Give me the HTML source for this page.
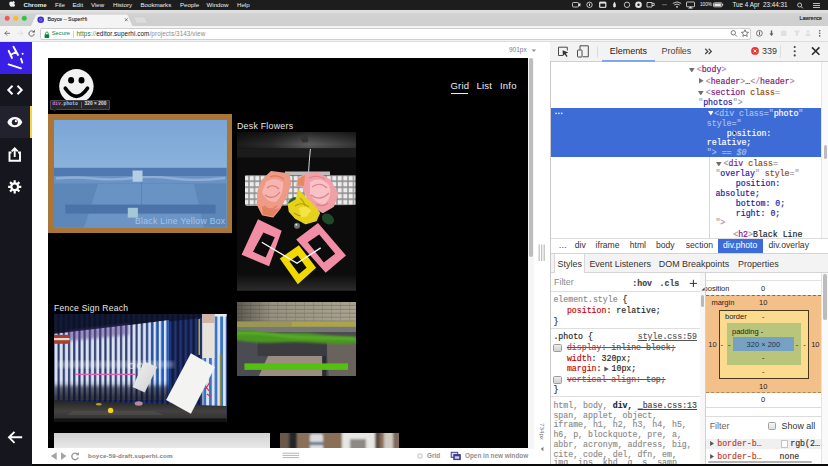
<!DOCTYPE html>
<html>
<head>
<meta charset="utf-8">
<title>Boyce - SuperHi</title>
<style>
*{box-sizing:border-box;margin:0;padding:0}
html,body{width:828px;height:466px;overflow:hidden;background:#fff}
body{position:relative;font-family:"Liberation Sans",sans-serif;color:#222}
.a{position:absolute;white-space:nowrap}
.t{position:absolute;white-space:nowrap;line-height:1;transform-origin:0 50%}
.mono{font-family:"Liberation Mono",monospace}
/* ---- mac menubar ---- */
#menubar{left:0;top:0;width:828px;height:9.5px;background:#1d1d1d}
#menubar .t{color:#eee;font-size:6.15px;top:1.8px}
/* ---- chrome frame ---- */
#tabstrip{left:0;top:9.5px;width:828px;height:16.5px;background:linear-gradient(#e2e2e2 0,#dcdcdc 2.5px,#d1d1d1 4.5px,#cfcfcf 100%)}
#toolbar{left:0;top:26px;width:828px;height:16px;background:#f4f4f4;border-bottom:1px solid #dcdcdc}
#urlbar{left:40px;top:27.5px;width:711px;height:12px;background:#fff;border:0.5px solid #cfcfcf;border-radius:2px}
/* ---- superhi sidebar ---- */
#side{left:0;top:42px;width:32px;height:424px;background:#16161e}
#logo{left:0;top:42px;width:32px;height:32px;background:#3a1fe6}
#siderow{left:0;top:106px;width:32px;height:32px;background:#22222f}
#sidebar-y{left:29.5px;top:106px;width:2.5px;height:32px;background:#f5d63d}
/* ---- preview ---- */
#page{left:48px;top:58px;width:479.5px;height:389.8px;background:#000;overflow:hidden}
#bottomstrip{left:32px;top:463.9px;width:796px;height:3px;background:#0a0a0a}
/* ---- devtools ---- */
#dt{left:550px;top:42px;width:278px;height:422px;background:#fff;overflow:hidden}
#dtbar{left:0;top:0;width:278px;height:19.5px;background:#f3f3f3;border-bottom:0.7px solid #d0d0d0}
.dts{font-size:8.95px;color:#333}
.tree{font-family:"Liberation Mono",monospace;font-size:8.24px;line-height:1;position:absolute;white-space:pre;-webkit-text-stroke:.18px currentColor}
.tg{color:#881280}.br{font-style:normal;color:#a98fa8}.sel .br{color:#a9bff0}.at{color:#994500}.av{color:#1a1aa6}.gy{color:#a8a8a8}
.sel .tg,.sel .at,.sel .gy{color:#a9bff0}.sel .av{color:#fff}
.css{font-family:"Liberation Mono",monospace;font-size:8.24px;line-height:1;position:absolute;white-space:pre;color:#222;-webkit-text-stroke:.15px currentColor}
.pn{color:#c80000}
.bm{font-size:7.5px;color:#222;position:absolute;white-space:nowrap;line-height:1;transform:translate(-50%,-50%)}
</style>
</head>
<body>
<!-- MENUBAR -->
<div id="menubar" class="a">
<svg class="a" style="left:9px;top:1.2px" width="6" height="7" viewBox="0 0 12 14"><path fill="#eee" d="M8.6 0c.1 1-.3 1.900-.9 2.600-.6.700-1.500 1.200-2.300 1.100-.1-.9.400-1.900.9-2.500C6.900.5 7.900.1 8.600 0zM11.400 10.300c-.4.900-.6 1.300-1.100 2.100-.7 1.100-1.700 2.400-2.900 2.400-1.100 0-1.400-.7-2.900-.7s-1.800.7-2.900.7C.4 14.800-.6 13.600-1.300 12.500-3.200 9.500-3.400 6-2.200 4.200c.8-1.300 2.200-2.100 3.400-2.100 1.300 0 2.100.7 3.200.7 1 0 1.700-.7 3.200-.7 1.100 0 2.300.6 3.100 1.700-2.700 1.500-2.300 5.400.7 6.500z" transform="translate(3 -1) scale(.85)"/></svg>
<span class="t" style="left:23.500px;font-weight:bold;font-size:6.100px">Chrome</span>
<span class="t" style="left:55px">File</span>
<span class="t" style="left:72.500px">Edit</span>
<span class="t" style="left:91px">View</span>
<span class="t" style="left:113px">History</span>
<span class="t" style="left:140.5px">Bookmarks</span>
<span class="t" style="left:180px">People</span>
<span class="t" style="left:206.5px">Window</span>
<span class="t" style="left:237px">Help</span>
<!-- status icons -->
<svg class="a" style="left:570px;top:0" width="160" height="9.5" viewBox="0 0 160 9.500">
<g fill="none" stroke="#e6e6e6" stroke-width=".8">
<rect x="2.500" y="2.500" width="6" height="4.500" rx=".8"/><circle cx="19.500" cy="4.800" r="2.700"/>
<rect x="29.500" y="2" width="6.500" height="5.500" rx=".6" fill="#e6e6e6"/>
<circle cx="57" cy="4.800" r="2.700"/>
<path d="M102.800 3.400 q4.200-3 8.400 0 M104.300 5 q2.700-2 5.400 0"/>
<rect x="116.500" y="2" width="8" height="4.800" rx=".5"/>
<path d="M77 2.500 h5 v4.500 h-5z M82 3.300 h2.200 v2.200 h-2.200"/>
<rect x="143.500" y="2.800" width="8.500" height="4" rx=".8"/>
</g>
<g fill="#e6e6e6">
<path d="M44.500 1.800 q2.200 2.600 1.300 5 q-1.300 1.400-2.600 0 q-.9-2.400 1.300-5z"/>
<circle cx="68.500" cy="4.800" r="3.300"/><rect x="92" y="4.400" width="5" height=".8" opacity=".5"/>
<circle cx="107" cy="6.800" r=".9"/><path d="M118 8.600 l2.500-2.200 l2.500 2.200z"/>
<rect x="144.300" y="3.500" width="6.600" height="2.600"/><rect x="152.300" y="4" width=".9" height="1.600"/>
<path d="M8.600 4 l1.800-1 v3.600 l-1.800-1z"/><rect x="19.100" y="3.500" width=".9" height="2.600"/>
</g>
<g fill="#1d1d1d"><circle cx="68.500" cy="4.800" r="1.200"/><rect x="30.300" y="3.600" width="4.900" height="3.200"/><path d="M56.300 3.200 h1.200 v1.800 h1.300 v.9 h-2.500z"/></g>
</svg>
<span class="t" style="left:700px;font-size:4.700px;top:2.600px">100%</span>
<span class="t" style="left:732.500px;font-size:6.300px">Tue 4 Apr&nbsp; 23:44:31</span>
<svg class="a" style="left:796px;top:1.500px" width="30" height="7" viewBox="0 0 30 7"><circle cx="3.600" cy="3" r="2" fill="none" stroke="#e6e6e6" stroke-width=".8"/><path d="M5 4.500 l1.800 1.800" stroke="#e6e6e6" stroke-width=".9"/><g fill="#cfcfcf"><rect x="17" y="1" width="7" height=".9"/><rect x="17" y="3" width="7" height=".9"/><rect x="17" y="5" width="7" height=".9"/></g></svg>
</div>
<!-- CHROME -->
<div id="tabstrip" class="a">
<svg class="a" style="left:0;top:0" width="160" height="16.500" viewBox="0 0 160 16.500">
<path d="M30.500 16.500 L35.500 5 Q36 4.200 37 4.200 H126.500 Q127.500 4.200 128 5 L133 16.500z" fill="#f4f4f4" stroke="#bdbdbd" stroke-width=".4"/>
<path d="M133.500 6.800 H144.500 L147.500 13.300 H136.500z" fill="#dcdcdc" stroke="#c4c4c4" stroke-width=".4"/>
<circle cx="7.200" cy="8.200" r="2.500" fill="#f25a52"/><circle cx="15.800" cy="8.200" r="2.500" fill="#f6bc2f"/><circle cx="24.300" cy="8.200" r="2.500" fill="#2ec840"/>
<circle cx="40.700" cy="9.700" r="3.300" fill="#3a2fd8"/><circle cx="40.700" cy="9.700" r="1.200" fill="none" stroke="#9aa0ff" stroke-width=".6"/>
<path d="M124.800 8.200 l3 3 M127.800 8.200 l-3 3" stroke="#555" stroke-width=".7"/>
</svg>
<span class="t" style="left:47.500px;top:7.200px;font-size:5.300px;color:#1a1a1a;-webkit-text-stroke:.1px #1a1a1a">Boyce – SuperHi</span>
<span class="t" style="left:799.500px;top:6.500px;font-size:5.200px;color:#111;-webkit-text-stroke:.12px #111">Lawrence</span>
</div>
<div id="toolbar" class="a">
<svg class="a" style="left:0;top:0" width="40" height="15" viewBox="0 0 40 15"><g fill="none" stroke-linecap="round" stroke-linejoin="round">
<path d="M9.600 7.300 H5 M7 5.200 L4.900 7.300 L7 9.400" stroke="#6a6a6a" stroke-width=".9"/>
<path d="M17.500 7.300 H22.700 M20.500 5 L22.800 7.300 L20.500 9.600" stroke="#dedede" stroke-width=".9"/>
<path d="M33.600 5.700 A2.700 2.700 0 1 0 34.200 8.300" stroke="#5a5a5a" stroke-width=".9"/></g><path d="M34.800 3.800 v2.600 h-2.600z" fill="#5a5a5a"/></svg>
<svg class="a" style="left:728px;top:0;z-index:3" width="100" height="15" viewBox="0 0 100 15"><g fill="none" stroke="#5a5a5a" stroke-width=".8">
<circle cx="5.300" cy="6.800" r="2.200"/><path d="M6.900 8.500 l2 2"/>
<path d="M17 3.800 l1.050 2.300 2.500.25 -1.900 1.650 .55 2.450 -2.200-1.300 -2.200 1.300 .55-2.450 -1.900-1.650 2.500-.25z"/>
<circle cx="31.400" cy="7.300" r="2.900"/></g>
<g fill="#5a5a5a"><rect x="31" y="5.500" width=".9" height="3.600"/><path d="M42.800 4.500 h1.400 v3 h1.300 l-2 2.600 -2-2.600 h1.300z"/>
<circle cx="91.700" cy="4.700" r=".8"/><circle cx="91.700" cy="7.300" r=".8"/><circle cx="91.700" cy="9.900" r=".8"/></g>
<g fill="#e0e0e0"><rect x="53" y="4.500" width="5.500" height="5.500" rx="1"/><path d="M66 4.500 h6 l-2 3 v2.500 h-2 v-2.500z"/><path d="M77 10 q3-6 6 0z"/><circle cx="80" cy="5.500" r="1.300"/></g></svg>
</div>
<div id="urlbar" class="a">
<svg class="a" style="left:3px;top:2px" width="6" height="8" viewBox="0 0 6 8"><rect x=".6" y="3.200" width="4.600" height="3.800" rx=".6" fill="#0b8043"/><path d="M1.600 3.300 V2.300 a1.300 1.300 0 0 1 2.600 0 V3.300" fill="none" stroke="#0b8043" stroke-width=".8"/></svg>
<span class="t" style="left:10.700px;top:2.700px;font-size:5.800px;color:#0b8043">Secure</span>
<span class="a" style="left:32.300px;top:2px;width:.5px;height:7.500px;background:#d0d0d0"></span>
<span class="t" style="left:35.500px;top:2.400px;font-size:6.300px;letter-spacing:.1px;color:#8a8a8a"><span style="color:#0b8043">https</span>://<span style="color:#111">editor.superhi.com</span>/projects/3143/view</span>
</div>
<!-- SIDEBAR -->
<div id="side" class="a"></div>
<div id="logo" class="a"></div>
<div id="siderow" class="a"></div>
<div id="sidebar-y" class="a"></div>
<svg class="a" style="left:0;top:42px" width="32" height="424" viewBox="0 0 32 424">
<!-- Hi logo -->
<g stroke="#fff" stroke-width="1.900" stroke-linecap="round" fill="none">
<path d="M8.700 8.800 L12 16 M13.500 4.800 L18 13 M10.500 13 L15.800 10"/>
<path d="M21 16.800 L22.300 20.600"/>
<path d="M8.600 22.400 L21 26.300"/>
</g><circle cx="22.600" cy="11.800" r="1" fill="#fff"/>
<!-- code icon -->
<g stroke="#fff" stroke-width="2" fill="none" stroke-linejoin="miter"><path d="M12.500 43.700 L8.300 48 L12.500 52.300"/><path d="M17.500 43.700 L21.700 48 L17.500 52.300"/></g>
<!-- eye -->
<path d="M7.300 80.200 C10 73.400 19.600 73.400 22.300 80.200 C19.600 87 10 87 7.300 80.200z" fill="#fff"/><circle cx="14.800" cy="80.200" r="3" fill="#22222f"/><circle cx="15.900" cy="79.200" r="1.100" fill="#fff"/>
<!-- share -->
<g stroke="#fff" stroke-width="1.900" fill="none"><path d="M11.500 110.500 H9.500 V118.800 H20 V110.500 H18"/><path d="M14.700 115 V106.500 M11.700 109.300 L14.700 106.300 L17.700 109.300"/></g>
<!-- gear -->
<g transform="translate(14.700 144.800)"><g stroke="#fff" stroke-width="2.200"><path d="M0 -6.600 V6.600 M-6.600 0 H6.600 M-4.650 -4.650 L4.650 4.650 M-4.650 4.650 L4.650 -4.650"/></g><circle r="4.500" fill="#fff"/><circle r="2.300" fill="#15151f"/></g>
<!-- back arrow -->
<g stroke="#fff" stroke-width="1.900" fill="none"><path d="M9 395.300 H22.200 M14.500 389.800 L9 395.300 L14.500 400.800"/></g>
</svg>
<!-- PREVIEW -->
<div id="page" class="a">
<!-- coordinates inside #page are screen coords minus (48,58) -->
<!-- smiley -->
<svg class="a" style="left:9px;top:9px" width="38" height="38" viewBox="0 0 38 38"><circle cx="19.400" cy="19.300" r="17.200" fill="#f2f2f2"/><ellipse cx="14.100" cy="13.300" rx="3" ry="3.200" fill="#000"/><ellipse cx="24.500" cy="13.300" rx="3" ry="3.200" fill="#000"/><path d="M8.300 21.300 Q19.400 37.400 30.500 21.300" fill="none" stroke="#000" stroke-width="3.700" stroke-linecap="round"/></svg>
<!-- nav -->
<span class="t" style="left:402.500px;top:22.900px;font-size:9.500px;color:#eee;letter-spacing:.2px">Grid</span>
<span class="a" style="left:402.500px;top:34.700px;width:17.500px;height:1px;background:#eee"></span>
<span class="t" style="left:428.500px;top:22.900px;font-size:9.500px;color:#eee;letter-spacing:.2px">List</span>
<span class="t" style="left:452px;top:22.900px;font-size:9.500px;color:#eee;letter-spacing:.2px">Info</span>
<!-- inspect tooltip -->
<div class="a" style="left:1.500px;top:41.800px;width:60.300px;height:9.800px;background:#27272b;border:.5px solid #4a4a50;border-radius:1px"></div>
<svg class="a" style="left:3.500px;top:51.400px" width="6" height="3" viewBox="0 0 6 3"><path d="M0 0 H5 L2.500 2.600z" fill="#2c2c30"/></svg>
<span class="t mono" style="left:4.200px;top:44.200px;font-size:4.750px;font-weight:bold;color:#d070dc">div<span style="color:#9ccbf2">.photo</span></span>
<span class="a" style="left:33px;top:43.500px;width:.5px;height:6.500px;background:#5c5c62"></span>
<span class="t" style="left:36.600px;top:44.200px;font-size:4.700px;font-weight:bold;color:#e4e4e4;letter-spacing:.1px">320 × 200</span>
<!-- photo 1 with inspect overlay -->
<div class="a" style="left:.4px;top:56.300px;width:183.600px;height:118.300px;background:#aa7638"></div>
<div id="p1" class="a" style="left:6px;top:62px;width:172.700px;height:107.800px;background:#7da6d6;overflow:hidden">
<svg class="a" style="left:0;top:0" width="172.700" height="107.800" viewBox="0 0 172.700 107.800">
<defs><linearGradient id="sky" x1="0" y1="0" x2="0" y2="1"><stop offset="0" stop-color="#7ba5d5"/><stop offset="1" stop-color="#8bb2dc"/></linearGradient>
<filter id="bl1" x="-5%" y="-20%" width="110%" height="140%"><feGaussianBlur stdDeviation=".7"/></filter></defs>
<rect width="172.700" height="48" fill="url(#sky)"/>
<rect y="47.800" width="172.700" height="8.600" fill="#4f79b0"/>
<rect y="56" width="172.700" height="8" fill="#6a92c4"/>
<path d="M2 58.500 Q20 56.500 40 58.500 T80 58 T120 58.500 T171 58" stroke="#a6c2e4" stroke-width="2.400" fill="none" opacity=".6" filter="url(#bl1)"/>
<rect y="63.500" width="172.700" height="44.300" fill="#5d86b9"/>
<path d="M44 64 H140 L150 107.800 H30z" fill="#6a93c5"/>
<path d="M30 107.800 L36 95 H140 L148 107.800z" fill="#6c95c6"/>
<rect x="11.300" y="84.600" width="150.300" height="9" fill="#4b73aa"/>
<rect x="87.300" y="61" width=".7" height="24" fill="#46699a" opacity=".6"/>
<rect x="78.600" y="50.500" width="9.900" height="11.200" fill="#b3cde6" filter="url(#bl1)"/>
<rect x="73.800" y="87.800" width="10.100" height="9.800" fill="#a5c8d7"/>
</svg>
<span class="t" style="right:1.200px;top:96.900px;font-size:8.600px;color:#a3c4e8;letter-spacing:.33px">Black Line Yellow Box</span>
</div>
<!-- photo 2 -->
<span class="t" style="left:189px;top:63.500px;font-size:8.800px;color:#e8e8e8;letter-spacing:.25px">Desk Flowers</span>
<div id="p2" class="a" style="left:189px;top:74.300px;width:119.300px;height:158.600px;background:#0c0c0c;overflow:hidden">
<svg class="a" style="left:0;top:0" width="119.300" height="158.600" viewBox="0 0 119.300 158.600">
<defs>
<linearGradient id="chin" x1="0" y1="0" x2="1" y2="0"><stop offset="0" stop-color="#1b1b1b"/><stop offset=".3" stop-color="#2e2e2e"/><stop offset=".6" stop-color="#5e5e5e"/><stop offset="1" stop-color="#343434"/></linearGradient>
<linearGradient id="chinv" x1="0" y1="0" x2="0" y2="1"><stop offset="0" stop-color="#000" stop-opacity=".6"/><stop offset=".75" stop-color="#000" stop-opacity="0"/><stop offset="1" stop-color="#000" stop-opacity=".15"/></linearGradient>
<radialGradient id="rose1" cx=".45" cy=".4" r=".65"><stop offset="0" stop-color="#f9bdb6"/><stop offset=".6" stop-color="#f0958a"/><stop offset="1" stop-color="#d8705e"/></radialGradient>
<radialGradient id="rosey" cx=".5" cy=".45" r=".6"><stop offset="0" stop-color="#f5e23a"/><stop offset=".7" stop-color="#e3c81a"/><stop offset="1" stop-color="#b59a10"/></radialGradient>
<linearGradient id="deskb" x1="0" y1="0" x2="0" y2="1"><stop offset="0" stop-color="#0c0c0c"/><stop offset="1" stop-color="#2c2c2c"/></linearGradient>
<pattern id="keys" width="5.500" height="6" x="1" y="1.200" patternUnits="userSpaceOnUse"><rect width="5.500" height="6" fill="#8e8e8e"/><rect x=".7" y=".8" width="4.100" height="4.400" fill="#ececec"/></pattern>
<filter id="bl2"><feGaussianBlur stdDeviation=".5"/></filter>
</defs>
<rect width="119.300" height="16.500" fill="url(#chin)"/><rect width="119.300" height="16.500" fill="url(#chinv)"/>
<path d="M67.700 4.600 c1-1.400 3-1.200 3.300 0 c-1.300 .8-1.200 2.900 .2 3.500 c-.5 1.400-1.500 2.400-2.200 2.400 c-.6 0-.8-.4-1.500-.4 s-1 .4-1.500 .4 c-1 0-2.600-2.400-2.300-4.300 c.3-1.800 2.400-2.500 4-1.600z" fill="#333" transform="translate(-1 -.3) scale(1.020)"/>
<rect y="16.500" width="119.300" height="9" fill="#1b1b1b"/>
<rect y="142" width="119.300" height="16.600" fill="url(#deskb)"/>
<path d="M73.400 17 Q72 30 71.500 42" stroke="#d8d8d8" stroke-width="1" fill="none"/>
<rect x="48" y="39.500" width="45" height="3.600" fill="#bdbdbd" filter="url(#bl2)"/>
<path d="M9 43.200 H118.500 V73 L10 74 Q8 74 8 72 V44.200 Q8 43.200 9 43.200z" fill="url(#keys)" filter="url(#bl2)"/>
<!-- leaves -->
<ellipse cx="91" cy="87" rx="6.500" ry="5" fill="#1e4a28" transform="rotate(35 91 87)"/>
<ellipse cx="55.500" cy="69" rx="5" ry="2.600" fill="#2b5e2a" transform="rotate(-40 55.500 69)"/>
<circle cx="60" cy="93.800" r="3" fill="#6f7472"/><circle cx="59.300" cy="92.800" r="1" fill="#e8e8e8"/>
<!-- roses -->
<g filter="url(#bl2)">
<path d="M34.300 40 L51.500 42.300 L53.200 51.700 L49.800 62 L42.900 75.800 L36 84.400 L25.800 82.600 L20.600 72.300 L21.500 58.600 L25.800 48.300z" fill="#ee9a84" stroke="#ee9a84" stroke-width="2" stroke-linejoin="round"/>
<path d="M29 50 Q37 44 46 50 Q47 62 39 70 Q28 70 25 60z" fill="#f6b4b2"/>
<path d="M30 56 q6-5 12 1 M28 63 q8 6 15-3 M27 74 q6 6 13 0 M33 45 q7-3 14 2" stroke="#dc7c66" stroke-width="1.100" fill="none"/>
<path d="M25.800 82.600 L36 84.400 L42.900 75.800 Q34 80 25 74z" fill="#e27f5e"/>
<path d="M68.700 42.300 L80.700 41.100 L92.700 48.300 L100.400 62 L96.100 74.100 L85.800 80.100 L75.500 74.100 L68.700 62 L66.100 53.500 L60.100 53.500 L61.800 46.600z" fill="#f0a0a6" stroke="#f0a0a6" stroke-width="2" stroke-linejoin="round"/>
<path d="M73 50 Q83 44 92 53 Q96 64 88 72 Q78 72 73 62z" fill="#f8c2c6"/>
<path d="M61 47 L68 43 L67 54 L60.500 53.500z" fill="#e48a62"/>
<path d="M75 55 q8-6 15 1 M74 63 q9 7 18-2 M79 72 q6 4 12-1 M72 46 q8-4 16 1" stroke="#e0808a" stroke-width="1.100" fill="none"/>
<path d="M61.800 58.600 L67 64.600 L75.500 72.300 L82.400 80.900 L79 88.600 L68.700 91.600 L58.400 86.100 L52.400 79.200 L51.500 72.300 L59.200 68z" fill="#e6d21a" stroke="#e6d21a" stroke-width="1.500" stroke-linejoin="round"/>
<path d="M58 74 q7-5 14 1 M57 81 q8 6 16 0 M63 66 q4 3 5 8" stroke="#b49c10" stroke-width="1.100" fill="none"/>
<path d="M62 76 Q68 72 74 78 Q72 86 64 85z" fill="#f3e544"/>
</g>
<!-- frames -->
<path fill="#f28da6" fill-rule="evenodd" d="M21 87.200 L44.700 98.700 L32.100 134.300 L4.600 122.800z M26.400 100.600 L37.800 105.200 L28.700 125.500 L16 119.700z"/>
<path fill="#f0d800" fill-rule="evenodd" d="M42.800 126.600 L61.900 113.200 L79.100 135.800 L60.800 152.200z M60.800 123.600 L69.600 135.800 L61.900 141.900 L52.400 129.300z"/>
<path fill="#f28da6" fill-rule="evenodd" d="M81 91 L109 123.600 L88.700 140.800 L59.200 107.500z M82.200 102.500 L98.200 121.700 L86.800 130.500 L70.700 110.200z"/>
<path d="M24.800 110.200 L60 131.200 L83.700 115.900" stroke="#fff" stroke-width="1.300" fill="none"/>
</svg>
</div>
<!-- photo 3 -->
<span class="t" style="left:6px;top:245.500px;font-size:8.550px;color:#e8e8e8;letter-spacing:.25px">Fence Sign Reach</span>
<div id="p3" class="a" style="left:6px;top:256.300px;width:172.600px;height:108px;background:#14182a;overflow:hidden">
<svg class="a" style="left:0;top:0" width="172.600" height="108" viewBox="0 0 172.600 108">
<defs>
<pattern id="st1" width="5.200" height="10" patternUnits="userSpaceOnUse"><rect width="5.200" height="10" fill="#2a3768"/><rect x=".5" width="3.100" height="10" fill="#d9e2f2"/></pattern>
<pattern id="st1b" width="5.200" height="10" patternUnits="userSpaceOnUse"><rect width="5.200" height="10" fill="#2459b8"/><rect x=".8" width="2.300" height="10" fill="#dfe8f8"/></pattern>
<linearGradient id="lr" x1="0" y1="0" x2="1" y2="0"><stop offset="0" stop-color="#fff" stop-opacity="0"/><stop offset=".5" stop-color="#fff" stop-opacity="0"/><stop offset=".62" stop-color="#fff" stop-opacity="1"/><stop offset="1" stop-color="#fff" stop-opacity="1"/></linearGradient>
<mask id="mr"><rect width="172.600" height="108" fill="url(#lr)"/></mask>
<pattern id="st2" width="5.200" height="10" patternUnits="userSpaceOnUse"><rect width="5.200" height="10" fill="#121a3c"/><rect x=".6" width="2.400" height="10" fill="#22357a"/></pattern>
<pattern id="st3" width="5.600" height="10" patternUnits="userSpaceOnUse"><rect width="5.600" height="10" fill="#3a72c2"/><rect x="1" width="2.800" height="10" fill="#dfe6ee"/></pattern>
<linearGradient id="fade" x1="0" y1="0" x2="1" y2="0"><stop offset="0" stop-color="#fff" stop-opacity=".28"/><stop offset=".5" stop-color="#fff" stop-opacity=".1"/><stop offset=".56" stop-color="#1d4fb0" stop-opacity=".55"/><stop offset="1" stop-color="#1d4fb0" stop-opacity=".6"/></linearGradient>
<linearGradient id="fadev" x1="0" y1="0" x2="0" y2="1"><stop offset="0" stop-color="#0d1020" stop-opacity="0"/><stop offset=".75" stop-color="#0d1020" stop-opacity="0"/><stop offset="1" stop-color="#0d1020" stop-opacity=".75"/></linearGradient>
<linearGradient id="flr" x1="0" y1="0" x2="0" y2="1"><stop offset="0" stop-color="#222224"/><stop offset=".5" stop-color="#444240"/><stop offset="1" stop-color="#2e2d2c"/></linearGradient>
<linearGradient id="wr" x1="0" y1="0" x2="1" y2="1"><stop offset="0" stop-color="#f2f2f0"/><stop offset="1" stop-color="#cfcfcd"/></linearGradient>
<filter id="bl3"><feGaussianBlur stdDeviation=".6"/></filter>
<filter id="bl3b"><feGaussianBlur stdDeviation="1.600"/></filter>
</defs>
<rect width="172.600" height="108" fill="url(#st2)"/>
<path d="M0 0 H148 V4 L0 19z" fill="#0c0f1e" opacity=".7"/>
<g filter="url(#bl3)">
<path d="M0 20 L114.900 6.300 V86 H0z" fill="url(#st1)"/>
<path d="M0 20 L114.900 6.300 V86 H0z" fill="url(#st1b)" mask="url(#mr)"/>
<path d="M0 20 L114.900 6.300 V86 H0z" fill="url(#fadev)"/>
</g>
<path d="M14 17 L75 10 V21 L14 27z" fill="#5a3f88" opacity=".5" filter="url(#bl3b)"/>
<rect x="4" y="47" width="116" height="7" fill="#fff" opacity=".28" filter="url(#bl3b)"/>
<text x="74" y="54.800" font-family="Liberation Sans, sans-serif" font-size="9.500" font-weight="bold" fill="#fff" opacity=".5" letter-spacing="1.200" filter="url(#bl3)">OOS</text>
<rect x="0" y="72" width="115" height="14" fill="#0d1020" opacity=".45" filter="url(#bl3b)"/>
<!-- right panels -->
<rect x="148.400" y="0" width="24.200" height="93" fill="url(#st3)" filter="url(#bl3)"/>
<rect x="148.400" y="0" width="12" height="44" fill="#e9e2da"/><rect x="148.400" y="0" width="12" height="9" fill="#c9a79a" opacity=".8"/>
<rect x="161" y="0" width="11.600" height="2.500" fill="#e8ecf2"/>
<rect x="144.500" y="4.900" width="1.400" height="36" fill="#c9c044"/>
<rect x="165.800" y="40" width="1.600" height="52" fill="#8c8a3a"/>
<path d="M150 70 l5 7 m-4-1 l5-8 m-3 12 l4 3" stroke="#c83a4a" stroke-width="1.200" fill="none"/>
<!-- sign left -->
<rect x="0" y="20.800" width="15.500" height="9" fill="#a8402f"/><rect x="0" y="24" width="15.500" height="2.200" fill="#e6d8d0"/>
<!-- floor -->
<path d="M0 86 L172.600 92 V108 H0z" fill="url(#flr)"/>
<path d="M0 104.500 H172.600 V108 H0z" fill="#111"/>
<path d="M20 97 H100 L110 101 H12z" fill="#55534f" opacity=".55" filter="url(#bl3)"/>
<rect x="21.500" y="59.700" width="60.400" height="1.400" fill="#e25fb4"/>
<!-- white boards -->
<path d="M90.200 47.500 L103.300 53 L90.700 78.600 L78.600 73.100z" fill="url(#wr)"/>
<path d="M136.900 39.300 L161 53 L136.900 99.700 L112.100 86z" fill="#f3f3f2"/>
<ellipse cx="84.700" cy="89.500" rx="4" ry="2.200" fill="#b88a98"/>
<ellipse cx="44.800" cy="90.200" rx="3" ry="1.300" fill="#b59a30"/>
<circle cx="56.600" cy="96.400" r="2.700" fill="#f3d31c"/>
</svg>
</div>
<!-- photo 4 -->
<div id="p4" class="a" style="left:189px;top:243.500px;width:119.100px;height:74.200px;background:#4c4c52;overflow:hidden">
<svg class="a" style="left:0;top:0" width="119.100" height="74.200" viewBox="0 0 119.100 74.200">
<defs>
<pattern id="brick" width="9" height="3.900" patternUnits="userSpaceOnUse"><rect width="9" height="3.900" fill="#aaa491"/><rect y="3.100" width="9" height=".8" fill="#7d796c"/><rect x="4" width=".7" height="3.100" fill="#8f8a7b"/></pattern>
<linearGradient id="wl" x1="0" y1="0" x2="1" y2="0"><stop offset="0" stop-color="#2e2c28" stop-opacity=".65"/><stop offset=".3" stop-color="#2e2c28" stop-opacity=".15"/><stop offset="1" stop-color="#2e2c28" stop-opacity="0"/></linearGradient>
<filter id="bl4"><feGaussianBlur stdDeviation=".7"/></filter>
<filter id="bl4b"><feGaussianBlur stdDeviation="1.300"/></filter>
</defs>
<g filter="url(#bl4)">
<rect x="-2" y="-2" width="123" height="22" fill="url(#brick)"/>
<rect x="-2" y="-2" width="123" height="22" fill="url(#wl)"/>
<rect x="-2" y="19.400" width="123" height="6" fill="#9c9656"/>
<rect x="55" y="19.800" width="66" height="4.500" fill="#b0a84a" opacity=".8"/>
<rect x="-2" y="25" width="123" height="5" fill="#77777a"/>
<rect x="-2" y="38" width="123" height="40" fill="#4b4b52"/>
<path d="M89 38 H121 V78 H92z" fill="#6b625c"/>
<path d="M20.700 38.800 H89.900 V54 H20.700z" fill="#3a3a41"/>
<path d="M31 54 H85.300 V78 H20z" fill="#9b8d82"/>
<rect x="85.300" y="54" width="4" height="24" fill="#2b2b30"/>
</g>
<path d="M-2 29 Q10 27 22 29.500 T50 31 T80 32 T121 35 V41.500 Q100 42.500 80 41 T40 40.500 T-2 38z" fill="#4a9620" filter="url(#bl4b)"/>
<path d="M0 31 Q20 30 40 33 T90 36 T119 38" stroke="#5db326" stroke-width="3" fill="none" filter="url(#bl4b)" opacity=".8"/>
<rect x="7.400" y="61.400" width="103.700" height="6.500" fill="#56c010"/>
</svg>
</div>
<!-- photo 5,6 -->
<div id="p5" class="a" style="left:6px;top:374.700px;width:216px;height:16px;background:linear-gradient(#d0d0d0,#eaeaea)"></div>
<div id="p6" class="a" style="left:232px;top:374.700px;width:118.700px;height:16px;background:#8a7763;overflow:hidden">
<svg class="a" style="left:0;top:0" width="118.700" height="16" viewBox="0 0 118.700 16"><defs><filter id="bl6"><feGaussianBlur stdDeviation=".8"/></filter></defs>
<g filter="url(#bl6)">
<rect x="-2" y="-2" width="123" height="20" fill="#8a6f56"/>
<rect x="-2" y="-2" width="12" height="20" fill="#6a5848"/>
<rect x="9" y="-2" width="8" height="20" fill="#22262c"/>
<rect x="30" y="1" width="13" height="17" rx="2" fill="#d9dde2"/><rect x="30" y="9" width="13" height="3" fill="#5c6a80"/>
<rect x="62" y="-2" width="35" height="20" fill="#e8e6e2"/>
<rect x="70" y="6" width="16" height="12" fill="#8d8a86"/>
<rect x="95" y="-2" width="5" height="20" fill="#5a4c40"/>
<rect x="104" y="-2" width="10" height="20" fill="#cfcac2"/>
<rect x="113" y="-2" width="8" height="20" fill="#7f6a58"/>
</g></svg>
</div>
</div>
<!-- preview chrome -->
<span class="t" style="left:509px;top:47px;font-size:6.500px;color:#7a7a7a">901px</span>
<svg class="a" style="left:531px;top:49px" width="6" height="4" viewBox="0 0 6 4"><path d="M.8.500 H5 L2.900 2.900z" fill="#8a8a8a"/></svg>
<div class="a" style="left:527.500px;top:58px;width:6.500px;height:390.500px;background:#f6f6f6"></div>
<div class="a" style="left:529px;top:58px;width:4px;height:199px;background:#bdbdbd;border-radius:2px"></div>
<svg class="a" style="left:538px;top:244px" width="8" height="18" viewBox="0 0 8 18"><path d="M1.200 .5 V17 M3.700 .5 V17 M6.200 .5 V17" stroke="#bdbdbd" stroke-width="1.200"/></svg>
<!-- bottom bar -->
<svg class="a" style="left:48px;top:450px" width="34" height="12" viewBox="0 0 34 12"><path d="M8.700 2.300 V9.900 L2.900 6.100z M13 2.300 V9.900 L18.400 6.100z" fill="#a4a4a4"/><path d="M29.600 4.200 A3.300 3.300 0 1 0 30.300 7.400" fill="none" stroke="#989898" stroke-width="1.400"/><path d="M31 2 v3.200 h-3.200z" fill="#989898"/></svg>
<span class="t" style="left:88px;top:453px;font-size:6.250px;color:#808080;font-weight:bold;letter-spacing:.1px">boyce-59-draft.superhi.com</span>
<svg class="a" style="left:282px;top:452px" width="18" height="8" viewBox="0 0 18 8"><path d="M.5 1.200 H17 M.5 3.400 H17 M.5 5.600 H17" stroke="#b5b5b5" stroke-width="1"/></svg>
<svg class="a" style="left:416px;top:452px" width="8" height="8" viewBox="0 0 8 8"><circle cx="4" cy="4" r="3" fill="#dcdcdc"/><circle cx="4" cy="4" r="1.300" fill="#f4f4f4"/></svg>
<span class="t" style="left:427px;top:453px;font-size:6.400px;color:#909090;font-weight:bold">Grid</span>
<svg class="a" style="left:450px;top:451px" width="12" height="10" viewBox="0 0 12 10"><rect x="1.200" y="1.300" width="6.500" height="5" fill="#dcdcf4" stroke="#3c3c96" stroke-width="1"/><rect x="3.800" y="3.600" width="6.500" height="5" fill="#3c3c96" stroke="#3c3c96" stroke-width="1"/><rect x="4.800" y="5.300" width="4.400" height="2.400" fill="#d4d4f0"/></svg>
<span class="t" style="left:465px;top:453px;font-size:6.400px;color:#909090;font-weight:bold">Open in new window</span>
<span class="t" style="left:541.500px;top:420px;font-size:6.200px;color:#7a7a7a;transform:rotate(90deg);transform-origin:0 50%">734px</span>
<svg class="a" style="left:540px;top:445.500px" width="4" height="6" viewBox="0 0 4 6"><path d="M3.400 .8 V5.200 L.8 3z" fill="#7a7a7a"/></svg>
<!-- DEVTOOLS -->
<div id="dt" class="a">
<div class="a" style="left:0;top:0;width:1px;height:421.500px;background:#c9c9c9"></div>
<div id="dtbar" class="a">
<svg class="a" style="left:0;top:0" width="278" height="19.500" viewBox="0 0 278 19.500">
<g fill="none" stroke="#4a4a4a" stroke-width="1"><path d="M13 13.500 H8.500 V5.200 H17.300 V8.500"/><rect x="27.500" y="8" width="4.500" height="7" rx=".6"/><path d="M30 7.600 V3.800 H38.300 V14.800 H32.600"/></g>
<path d="M12.600 8.300 L18.300 10.600 L15.800 11.600 L17.600 14.300 L16.500 15 L14.700 12.300 L12.900 14z" fill="#333"/>
<rect x="47.300" y="4.500" width=".6" height="11" fill="#ccc"/>
<rect x="52" y="18.300" width="53" height="1.200" fill="#4a80e8"/>
<path d="M155.200 6.800 L157.800 9.400 L155.200 12 M158.700 6.800 L161.300 9.400 L158.700 12" fill="none" stroke="#444" stroke-width="1.250"/>
<circle cx="205" cy="8.900" r="3.900" fill="#e53935"/><path d="M203.500 7.400 l3 3 m0-3 l-3 3" stroke="#fff" stroke-width="1"/>
<rect x="230.200" y="3.500" width=".6" height="12" fill="#ccc"/>
<circle cx="244.700" cy="5" r="1.050" fill="#444"/><circle cx="244.700" cy="9.200" r="1.050" fill="#444"/><circle cx="244.700" cy="13.400" r="1.050" fill="#444"/>
<path d="M262 5.400 l7.400 7.400 m0-7.400 l-7.400 7.400" stroke="#2a2a2a" stroke-width="1.500"/>
</svg>
<span class="t dts" style="left:59.800px;top:5px;color:#222">Elements</span>
<span class="t dts" style="left:111.500px;top:5px;color:#444">Profiles</span>
<span class="t dts" style="left:212px;top:4.800px;color:#333">339</span>
</div>
<div class="a" style="left:1px;top:65.700px;width:270px;height:49.300px;background:#3d6cd6"></div>
<div class="a" style="left:159.300px;top:115px;width:.6px;height:80.700px;background:#d8d8d8"></div>
<svg class="a" style="left:5px;top:70px" width="8" height="3" viewBox="0 0 8 3"><circle cx="1.100" cy="1.300" r=".9" fill="#dfe7fb"/><circle cx="3.900" cy="1.300" r=".9" fill="#dfe7fb"/><circle cx="6.700" cy="1.300" r=".9" fill="#dfe7fb"/></svg>
<svg class="a" style="left:139.2px;top:25.90px" width="5.600" height="4.600" viewBox="0 0 5 4"><path d="M0 0 H5 L2.500 4z" fill="#6e6e6e"/></svg>
<div class="tree" style="left:146.7px;top:24.35px"><span class="tg"><i class="br">&lt;</i>body<i class="br">&gt;</i></span></div>
<svg class="a" style="left:149.2px;top:36.30px" width="4.600" height="5.600" viewBox="0 0 4 5"><path d="M0 0 V5 L4 2.500z" fill="#6e6e6e"/></svg>
<div class="tree" style="left:155.7px;top:35.50px"><span class="tg"><i class="br">&lt;</i>header<i class="br">&gt;</i></span><span style="color:#333">…</span><span class="tg"><i class="br">&lt;/</i>header<i class="br">&gt;</i></span></div>
<svg class="a" style="left:148.0px;top:48.50px" width="5.600" height="4.600" viewBox="0 0 5 4"><path d="M0 0 H5 L2.500 4z" fill="#6e6e6e"/></svg>
<div class="tree" style="left:155.7px;top:46.90px"><span class="tg"><i class="br">&lt;</i>section</span> <span class="at">class</span><span class="gy">=</span></div>
<div class="tree" style="left:148.2px;top:56.50px"><span class="gy">"</span><span class="av">photos</span><span class="gy">"</span><span class="tg"><i class="br">&gt;</i></span></div>
<div class="sel">
<svg class="a" style="left:157.5px;top:69.30px" width="5.600" height="4.600" viewBox="0 0 5 4"><path d="M0 0 H5 L2.500 4z" fill="#fff"/></svg>
<div class="tree" style="left:164.3px;top:67.70px"><span class="tg"><i class="br">&lt;</i>div</span> <span class="at">class</span><span class="gy">="</span><span class="av">photo</span><span class="gy">"</span></div>
<div class="tree" style="left:156.8px;top:77.50px"><span class="at">style</span><span class="gy">="</span></div>
<div class="tree" style="left:176.8px;top:87.60px"><span class="av">position:</span></div>
<div class="tree" style="left:156.8px;top:97.30px"><span class="av">relative;</span></div>
<div class="tree" style="left:156.8px;top:107.40px"><span class="gy">"</span><span class="tg"><i class="br">&gt;</i></span><span class="gy" style="font-style:italic"> == $0</span></div>
</div>
<svg class="a" style="left:166.2px;top:119.60px" width="5.600" height="4.600" viewBox="0 0 5 4"><path d="M0 0 H5 L2.500 4z" fill="#6e6e6e"/></svg>
<div class="tree" style="left:173.5px;top:118.00px"><span class="tg"><i class="br">&lt;</i>div</span> <span class="at">class</span><span class="gy">=</span></div>
<div class="tree" style="left:165.4px;top:127.90px"><span class="gy">"</span><span class="av">overlay</span><span class="gy">"</span> <span class="at">style</span><span class="gy">="</span></div>
<div class="tree" style="left:185.8px;top:137.80px"><span class="av">position:</span></div>
<div class="tree" style="left:165.4px;top:147.70px"><span class="av">absolute;</span></div>
<div class="tree" style="left:185.8px;top:157.60px"><span class="av">bottom: 0;</span></div>
<div class="tree" style="left:185.8px;top:167.50px"><span class="av">right: 0;</span></div>
<div class="tree" style="left:165.4px;top:177.40px"><span class="gy">"</span><span class="tg"><i class="br">&gt;</i></span></div>
<div class="tree" style="left:183.2px;top:188.60px"><span class="tg"><i class="br">&lt;</i>h2<i class="br">&gt;</i></span><span style="color:#222">Black Line</span></div>
<svg class="a" style="left:182.500px;top:88px" width="4.500" height="6.500" viewBox="0 0 9 13"><path d="M.5 .5 V10.500 L3 8.200 L4.800 12.300 L6.400 11.600 L4.600 7.600 H8z" fill="#111" stroke="#fff" stroke-width=".8"/></svg>
<!-- tree scrollbar --><div class="a" style="left:271px;top:19.500px;width:7px;height:176.200px;background:#fafafa;border-left:.5px solid #e6e6e6"></div>
<div class="a" style="left:273.600px;top:102.700px;width:3.400px;height:14px;background:#bdbdbd;border-radius:1.700px"></div>
<div class="a" style="left:1px;top:195.700px;width:277px;height:15px;background:#fff;border-top:.6px solid #dcdcdc"></div>
<div class="a" style="left:167.600px;top:196.500px;width:45.600px;height:14.200px;background:#3d6cd6"></div>
<span class="t" style="left:8.5px;top:198.800px;font-size:8.600px;color:#333">…</span>
<span class="t" style="left:24.7px;top:198.800px;font-size:8.600px;color:#333">div</span>
<span class="t" style="left:45.6px;top:198.800px;font-size:8.600px;color:#333">iframe</span>
<span class="t" style="left:79.8px;top:198.800px;font-size:8.600px;color:#333">html</span>
<span class="t" style="left:106.0px;top:198.800px;font-size:8.600px;color:#333">body</span>
<span class="t" style="left:135.8px;top:198.800px;font-size:8.600px;color:#333">section</span>
<span class="t" style="left:173.0px;top:198.800px;font-size:8.600px;color:#fff">div.photo</span>
<span class="t" style="left:218.5px;top:198.800px;font-size:8.600px;color:#333">div.overlay</span>
<div class="a" style="left:1px;top:210.700px;width:277px;height:20.300px;background:#f3f3f3;border-top:.6px solid #d4d4d4;border-bottom:.6px solid #d4d4d4"></div>
<div class="a" style="left:4px;top:212px;width:31.300px;height:19.200px;background:#fff;border-left:.6px solid #d8d8d8;border-right:.6px solid #d8d8d8"></div>
<span class="t" style="left:7.6px;top:217.900px;font-size:8.930px;color:#333">Styles</span>
<span class="t" style="left:39.4px;top:217.900px;font-size:8.930px;color:#333">Event Listeners</span>
<span class="t" style="left:108.8px;top:217.900px;font-size:8.930px;color:#333">DOM Breakpoints</span>
<span class="t" style="left:188.0px;top:217.900px;font-size:8.930px;color:#333">Properties</span>
<span class="t" style="left:4px;top:236.400px;font-size:8.900px;color:#8a8a8a">Filter</span>
<div class="css" style="left:82.3px;top:237.60px;font-weight:bold;color:#444">:hov</div>
<div class="css" style="left:109.5px;top:237.60px;font-weight:bold;color:#444">.cls</div>
<svg class="a" style="left:139px;top:236.500px" width="9" height="9" viewBox="0 0 9 9"><path d="M4.400 .8 V8 M.8 4.400 H8" stroke="#333" stroke-width="1"/></svg>
<div class="a" style="left:1px;top:249.300px;width:150px;height:.6px;background:#dedede"></div>
<div class="css" style="left:3.4px;top:254.30px;"><span style="color:#8a8a8a">element.style</span> {</div>
<div class="css" style="left:16.9px;top:265.45px;"><span class="pn">position</span>: relative;</div>
<div class="css" style="left:3.4px;top:276.20px;">}</div>
<div class="a" style="left:1px;top:285.500px;width:150px;height:.6px;background:#dedede"></div>
<div class="css" style="left:3.4px;top:290.70px;">.photo {</div>
<div class="css" style="left:87.7px;top:290.70px;"><span style="text-decoration:underline;color:#555">style.css:59</span></div>
<div class="a" style="left:3.400px;top:302.0px;width:9px;height:8.200px;background:linear-gradient(#ececec,#d0d0d0);border:.6px solid #9c9c9c;border-radius:1.500px"></div>
<div class="css" style="left:16.9px;top:302.30px;"><span style="text-decoration:line-through;color:#555"><span class="pn" style="color:#b84a4a">display</span>: inline-block;</span></div>
<div class="css" style="left:16.9px;top:312.60px;"><span class="pn">width</span>: 320px;</div>
<div class="css" style="left:16.9px;top:323.40px;"><span class="pn">margin</span>:<svg style="display:inline-block;width:10px;height:6px;vertical-align:-.3px" viewBox="0 0 10 6"><path d="M2.300 .4 V5.600 L6.800 3z" fill="#555"/></svg>10px;</div>
<div class="a" style="left:3.400px;top:333.7px;width:9px;height:8.200px;background:linear-gradient(#ececec,#d0d0d0);border:.6px solid #9c9c9c;border-radius:1.500px"></div>
<div class="css" style="left:16.9px;top:334.20px;"><span style="text-decoration:line-through;color:#555"><span class="pn" style="color:#b84a4a">vertical-align</span>: top;</span></div>
<div class="css" style="left:3.4px;top:344.30px;">}</div>
<div class="a" style="left:1px;top:354px;width:150px;height:.6px;background:#dedede"></div>
<div class="css" style="left:3.4px;top:359.70px;"><span style="color:#8a8a8a">html, body, </span><b>div,</b></div>
<div class="css" style="left:87.7px;top:359.70px;"><span style="text-decoration:underline;color:#444">_base.css:13</span></div>
<div class="css" style="left:3.4px;top:369.60px;color:#8a8a8a">span, applet, object,</div>
<div class="css" style="left:3.4px;top:379.30px;color:#8a8a8a">iframe, h1, h2, h3, h4, h5,</div>
<div class="css" style="left:3.4px;top:389.30px;color:#8a8a8a">h6, p, blockquote, pre, a,</div>
<div class="css" style="left:3.4px;top:399.00px;color:#8a8a8a">abbr, acronym, address, big,</div>
<div class="css" style="left:3.4px;top:408.60px;color:#8a8a8a">cite, code, del, dfn, em,</div>
<div class="css" style="left:3.4px;top:417.20px;color:#8a8a8a">img, ins, kbd, q, s, samp,</div>
<div class="a" style="left:150.300px;top:230.500px;width:5px;height:191px;background:#f7f7f7"></div>
<div class="a" style="left:150.900px;top:252.700px;width:3.300px;height:12px;background:#b9b9b9;border-radius:1.600px"></div>
<svg class="a" style="left:150.500px;top:245px" width="4" height="4" viewBox="0 0 4 4"><path d="M3.600 .4 V3.600 H.4z" fill="#444"/></svg>
<div class="a" style="left:155.200px;top:230.500px;width:.6px;height:191px;background:#d0d0d0"></div>
<div class="a" style="left:155.800px;top:231.300px;width:115.600px;height:7.500px;background:#fff;border-bottom:.6px solid #e2e2e2"></div>
<span class="t" style="left:153.600px;top:242.800px;font-size:7.500px;color:#222;clip-path:inset(0 0 0 2.200px)">position</span>
<span class="bm" style="left:213.2px;top:247.0px;">0</span>
<div class="a" style="left:156px;top:253.300px;width:115.400px;height:98.200px;background:#f4c08a;border-top:.6px dashed #8a6c4a;border-bottom:.6px dashed #a88660"></div>
<div class="a" style="left:168.600px;top:267.600px;width:90.100px;height:69.700px;background:#fbdb8f;border:.8px solid #4a3a1a"></div>
<div class="a" style="left:176.500px;top:280.600px;width:74.700px;height:42.400px;background:#b9c57a"></div>
<div class="a" style="left:183.200px;top:295.100px;width:60.500px;height:14.400px;background:#77a1c2"></div>
<span class="t" style="left:161.400px;top:257.200px;font-size:7.500px;color:#222">margin</span>
<span class="bm" style="left:213.2px;top:261.0px;">10</span>
<span class="t" style="left:175px;top:271px;font-size:7.500px;color:#222">border</span>
<span class="bm" style="left:213.2px;top:274.8px;">-</span>
<span class="t" style="left:182px;top:285.700px;font-size:7.500px;color:#222">padding -</span>
<span class="bm" style="left:213.4px;top:302.5px;color:#1d3550">320 × 200</span>
<span class="bm" style="left:162.4px;top:302.8px;">10</span>
<span class="bm" style="left:171.8px;top:302.8px;">-</span>
<span class="bm" style="left:179.3px;top:302.8px;">-</span>
<span class="bm" style="left:246.9px;top:302.8px;">-</span>
<span class="bm" style="left:254.4px;top:302.8px;">-</span>
<span class="bm" style="left:265.3px;top:302.8px;">10</span>
<span class="bm" style="left:213.2px;top:316.4px;">-</span>
<span class="bm" style="left:213.2px;top:330.4px;">-</span>
<span class="bm" style="left:213.2px;top:345.0px;">10</span>
<span class="bm" style="left:213.2px;top:358.4px;">0</span>
<div class="a" style="left:155.800px;top:365px;width:115.600px;height:.6px;background:#dcdcdc"></div>
<div class="a" style="left:155.800px;top:373.600px;width:115.600px;height:.6px;background:#dcdcdc"></div>
<span class="t" style="left:159.700px;top:380.300px;font-size:8.900px;color:#666">Filter</span>
<div class="a" style="left:217.700px;top:380.300px;width:8.500px;height:8.200px;background:linear-gradient(#f6f6f6,#dedede);border:.6px solid #a0a0a0;border-radius:1.500px"></div>
<span class="t" style="left:231.600px;top:380.300px;font-size:8.900px;color:#333">Show all</span>
<div class="a" style="left:155.800px;top:396.800px;width:115.600px;height:10px;background:#f0f0f0"></div>
<svg class="a" style="left:160.300px;top:399.2px" width="4.200" height="5" viewBox="0 0 4 5"><path d="M0 0 V5 L4 2.500z" fill="#555"/></svg>
<div class="css" style="left:167.200px;top:398.400px;color:#c0392b">border-b…</div>
<div class="a" style="left:230.500px;top:398px;width:7.500px;height:7.500px;background:#fff;border:.6px solid #c4c4c4"></div>
<div class="css" style="left:240.200px;top:398.400px;color:#333">rgb(2…</div>
<svg class="a" style="left:160.300px;top:411.7px" width="4.200" height="5" viewBox="0 0 4 5"><path d="M0 0 V5 L4 2.500z" fill="#555"/></svg>
<div class="css" style="left:167.200px;top:410.900px;color:#c0392b">border-b…</div>
<div class="css" style="left:229.500px;top:410.900px;color:#333">none</div>
<div class="a" style="left:157.500px;top:418.600px;width:104.200px;height:2.600px;background:#b4b4b4;border-radius:1.300px"></div>
<div class="a" style="left:271.400px;top:231.300px;width:6.600px;height:190.200px;background:#fafafa;border-left:.5px solid #e4e4e4"></div>
<div class="a" style="left:273.300px;top:232px;width:3.400px;height:46.400px;background:#bcbcbc;border-radius:1.700px"></div>
</div>
<div id="bottomstrip" class="a"></div>
</body>
</html>
